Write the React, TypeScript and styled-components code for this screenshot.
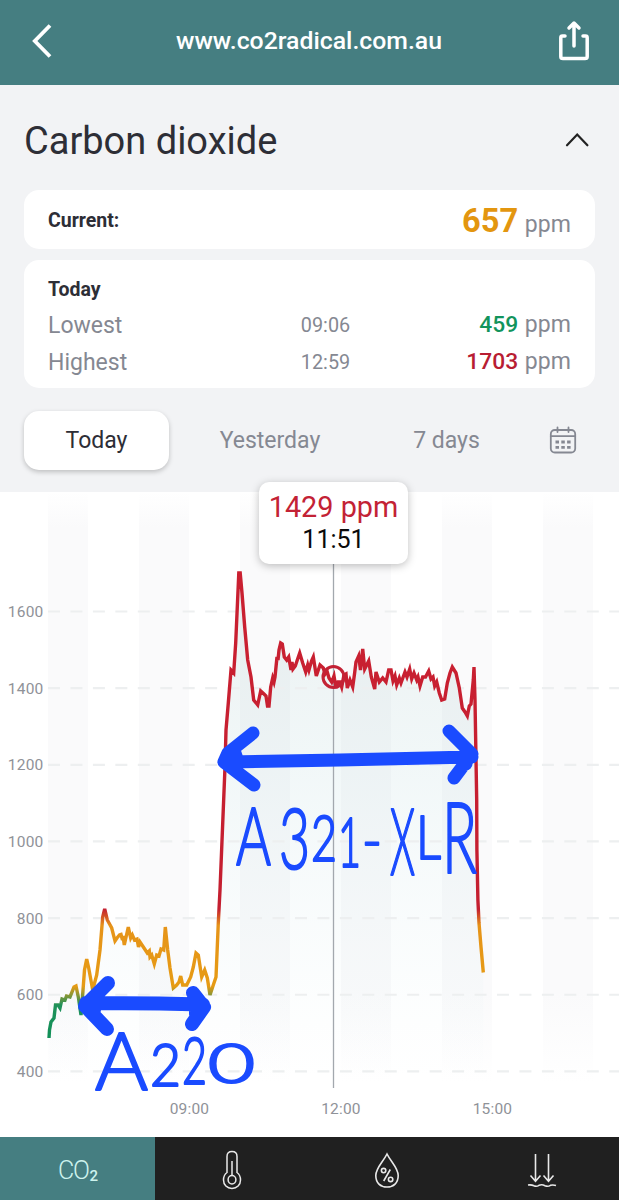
import React from "react";
import styled, { createGlobalStyle } from "styled-components";

const Global = createGlobalStyle`
  *, *::before, *::after { box-sizing: border-box; }
  body { margin: 0; background: #fff; font-family: Roboto, "Liberation Sans", sans-serif; }
`;

const Screen = styled.div`
  width: 619px;
  height: 1200px;
  display: flex;
  flex-direction: column;
  overflow: hidden;
  background: #fff;
`;

const Header = styled.header`
  height: 85px;
  flex: none;
  display: grid;
  grid-template-columns: 60px 1fr 60px;
  align-items: center;
  padding: 0 15px 4px 12px;
  background: #457e81;
  color: #fff;
`;

const IconButton = styled.button`
  display: flex;
  align-items: center;
  justify-content: center;
  padding: 0;
  border: 0;
  background: none;
  color: inherit;
`;

const SiteName = styled.div`
  padding-left: 2px;
  text-align: center;
  font-size: 24.8px;
  font-weight: 500;
  line-height: 30px;
  white-space: nowrap;
`;

const Summary = styled.section`
  height: 407px;
  flex: none;
  padding: 0 24px;
  background: #f2f3f5;
  color: #2d2e36;
`;

const TitleRow = styled.div`
  height: 105px;
  display: flex;
  align-items: center;
  justify-content: space-between;
  padding: 7px 6px 0 0;
`;

const Title = styled.h1`
  margin: 0;
  font-size: 38px;
  font-weight: 400;
  line-height: 44px;
`;

const Card = styled.div<{ $height: number; $gap: number }>`
  height: ${(p) => p.$height}px;
  margin-bottom: ${(p) => p.$gap}px;
  padding: 0 24px;
  border-radius: 15px;
  background: #fff;
`;

const CurrentRow = styled.div`
  height: 62px;
  display: flex;
  align-items: center;
  justify-content: space-between;
`;

const CardLabel = styled.div`
  font-size: 19.5px;
  font-weight: 700;
  line-height: 24px;
`;

const CardHeading = styled(CardLabel)`
  height: 46px;
  padding-top: 18px;
`;

const Reading = styled.div`
  text-align: right;
  white-space: nowrap;
`;

const Value = styled.span<{ $size: number; $color: string; $weight: number }>`
  font-size: ${(p) => p.$size}px;
  font-weight: ${(p) => p.$weight};
  color: ${(p) => p.$color};
`;

const Unit = styled.span`
  margin-left: 6.5px;
  font-size: 23px;
  color: #858892;
  letter-spacing: 0.1px;
`;

const StatRow = styled.div`
  height: 37px;
  display: grid;
  grid-template-columns: 1fr 60px 1fr;
  align-items: center;
  color: #858892;
`;

const StatName = styled.div`
  padding-top: 1px;
  font-size: 23px;
`;

const StatTime = styled.div`
  width: 92px;
  text-align: center;
  font-size: 19.8px;
  padding-top: 2px;
`;

const Ranges = styled.nav`
  display: flex;
  align-items: center;
  height: 60px;
`;

const Range = styled.button<{ $width: number; $active?: boolean }>`
  width: ${(p) => p.$width}px;
  height: 59px;
  flex: none;
  display: flex;
  align-items: center;
  justify-content: center;
  padding: 0;
  border: 0;
  border-radius: 15px;
  font-family: inherit;
  font-size: 23px;
  color: ${(p) => (p.$active ? "#2d2e36" : "#858892")};
  background: ${(p) => (p.$active ? "#fff" : "transparent")};
  box-shadow: ${(p) => (p.$active ? "0 2px 5px rgba(0, 0, 0, 0.22)" : "none")};
`;

const ChartPanel = styled.section`
  position: relative;
  height: 645px;
  flex: none;
`;

const Tooltip = styled.div`
  position: absolute;
  left: 259px;
  top: -10px;
  width: 149px;
  height: 82px;
  padding-top: 9px;
  border-radius: 10px;
  background: #fff;
  box-shadow: 0 2px 9px rgba(0, 0, 0, 0.25);
  text-align: center;
`;

const TooltipValue = styled.div`
  color: #c32235;
  font-size: 28.8px;
  line-height: 33px;
  white-space: nowrap;
`;

const TooltipTime = styled.div`
  color: #0a0a0a;
  font-size: 25px;
  line-height: 32px;
`;

const ChartSvg = styled.svg`
  display: block;
`;

const AxisText = styled.text`
  font-family: Roboto, sans-serif;
  font-size: 15.5px;
  letter-spacing: 0.2px;
  fill: #8f9298;
`;

const NoteText = styled.text`
  font-family: Lato, sans-serif;
  font-weight: 300;
  fill: #1a4bff;
  stroke: #1a4bff;
  stroke-width: 2.2px;
  stroke-linejoin: round;
`;

const TabBar = styled.nav`
  flex: 1;
  display: grid;
  grid-template-columns: repeat(4, 1fr);
`;

const Tab = styled.div<{ $active?: boolean }>`
  display: flex;
  align-items: center;
  justify-content: center;
  padding-top: 3px;
  background: ${(p) => (p.$active ? "#457e81" : "#202020")};
  color: ${(p) => (p.$active ? "#cdf3ee" : "#e9e9e9")};
`;

const Formula = styled.div`
  padding-top: 2px;
  font-size: 25px;
  font-weight: 300;
  letter-spacing: -1.4px;
  line-height: 30px;
  white-space: nowrap;
`;

const Subscript = styled.span`
  font-size: 15px;
  font-weight: 500;
  line-height: 1;
  margin-left: 1px;
  vertical-align: -2px;
`;

const bands = [
  [48, 40],
  [139, 50],
  [240, 50],
  [341, 50],
  [442, 50],
  [543, 50],
];

const levels = [1600, 1400, 1200, 1000, 800, 600, 400];
const levelY = (v: number) => 611.5 + ((1600 - v) / 200) * 76.65;

const times: [string, number][] = [
  ["09:00", 189.5],
  ["12:00", 341],
  ["15:00", 492.5],
];

const trace = `49,1038 49.5,1030 51,1022 54,1018 55.5,1005 58,1005 60,1008 62,999 65,1000 66.5,996 70,997 74,987
76,986 78.5,998 81,1015 82.5,997 84.5,970 86.7,959 88.7,968 92.7,990 96.7,975 100,950 102.7,917 104.7,909
107.3,920 111.7,928 115,941 117,938 119.5,935 121,934.5 122.5,940 123,936 124.3,945 128.3,927 130.7,938 132.3,935 134.5,940
137,939 138.5,947 140,942 144,948 147.3,953 149.3,951 150,957 151.7,955 154.3,964 156.7,955 159,956 161,949
163.7,950 165.3,927 167.7,950 170,968 173.3,988 176.7,985 179,982 180.7,976 182.7,985 186.7,985 190.7,977
193.3,967 196,953 198.3,955 201.7,977 204.7,970 207.3,978 210,995 213.3,985 216,977 218.3,923 220,890
225,767 226,730 228.3,703 231,670 233.7,673 235.7,643 238.8,573 240.2,573 242,593 244.7,627 247.7,660
251,677 253.7,700 257.7,705 260.7,691 264,694 266,696 267.5,706 269,706 270.7,687 272.7,678 274,682 275,677 277,657
278,660 279,650 280.7,643 282.3,644 284.3,657 286.7,660 288.7,657 291,670 292,662 293,669 295.3,666 297.3,660 299.7,653
302.7,663 305.7,672 307.7,665 309,670 311.5,661 313.3,657 316.3,676 320,665 323.3,668 325,674 327,671 329,678
331.7,682 334,676 336,688 338,682 340,682 341.7,687 344,675 346,674 347.3,688 350,680 352.7,687 354.5,674
356,662 358.7,656 360.5,670 362.7,649 364.7,669 368.7,661 371.3,677 374.7,689 376,672 379.3,682 382.7,678
386,682 388.7,670 391,670 393,681 395,676 396.7,685 399.3,678 401,683 405,672 407,677 409.7,669 411.7,679
414,673 416.7,680 418,677 420,686 422.7,677 425.5,677 428.7,671 431,679 433,677 434.7,686 436.7,682
439.3,693 441.7,700 444.7,699 447.3,683 450,673 452.3,667 456,673 459.3,688 462.3,708 465,712 467.3,716
469.3,706 471,704 473.3,680 474,667 475,700 476.7,800 476.9,850 477.9,900 479,923 481,947 483.3,972.5`;

function Chart() {
  return (
    <ChartSvg width="619" height="645" viewBox="0 492 619 645" fill="none">
      <defs>
        <linearGradient id="level" gradientUnits="userSpaceOnUse" x1="0" y1="573" x2="0" y2="1040">
          <stop offset="0" stopColor="#ca2031" />
          <stop offset="0.72" stopColor="#c41f30" />
          <stop offset="0.755" stopColor="#e69419" />
          <stop offset="0.885" stopColor="#e69b14" />
          <stop offset="0.925" stopColor="#1f915a" />
          <stop offset="1" stopColor="#109058" />
        </linearGradient>
        <linearGradient id="under" gradientUnits="userSpaceOnUse" x1="0" y1="573" x2="0" y2="1080">
          <stop offset="0" stopColor="#457e81" stopOpacity="0.11" />
          <stop offset="0.4" stopColor="#5aa4ac" stopOpacity="0.08" />
          <stop offset="1" stopColor="#7fc4d0" stopOpacity="0" />
        </linearGradient>
        <linearGradient id="band" x1="0" y1="0" x2="0" y2="1">
          <stop offset="0" stopColor="#fafafb" stopOpacity="0" />
          <stop offset="0.06" stopColor="#fafafb" />
          <stop offset="0.85" stopColor="#fafafb" />
          <stop offset="1" stopColor="#fafafb" stopOpacity="0" />
        </linearGradient>
      </defs>
      {bands.map(([x, w]) => (
        <rect key={x} x={x} y={492} width={w} height={590} fill="url(#band)" />
      ))}
      <polygon points={`${trace} 483.3,1085 49,1085`} fill="url(#under)" />
      {levels.map((v) => (
        <g key={v}>
          <path d={`M48 ${levelY(v)}H619`} stroke="#edeff0" strokeWidth="2.2" strokeDasharray="12 10.45" />
          <AxisText x="43.5" y={levelY(v) + 5.5} textAnchor="end">{v}</AxisText>
        </g>
      ))}
      {times.map(([label, x]) => (
        <AxisText key={label} x={x} y={1113.5} textAnchor="middle">{label}</AxisText>
      ))}
      <path d="M333.5 560V1088" stroke="#a3a8ae" strokeWidth="1.3" />
      <polyline points={trace} stroke="url(#level)" strokeWidth="3.4" strokeLinejoin="miter" />
      <circle cx="333.5" cy="677" r="10.5" stroke="#c32235" strokeWidth="3" />
      <g stroke="#1a4bff" strokeWidth="13" strokeLinecap="round" strokeLinejoin="round">
        <path d="M253 733L228 753L224 762L254 785M235 753L238 762M228 762L340 760L472 757M449 731L472 754L454 778M466 750V764" />
        <path d="M108 983L85 1006L107 1029M86 1003L160 1003.5L203 1004.5M193 993L204 1007L192 1024M94 1000V1010M196 1000V1014" strokeWidth="14" />
      </g>
      <NoteText>
        <tspan x="236" y="865" fontSize="80" textLength="35" lengthAdjust="spacingAndGlyphs">A</tspan>
        <tspan x="279" y="869" fontSize="85" textLength="31" lengthAdjust="spacingAndGlyphs">3</tspan>
        <tspan x="311" y="861" fontSize="64" textLength="26" lengthAdjust="spacingAndGlyphs">2</tspan>
        <tspan x="338" y="867" fontSize="68" textLength="23" lengthAdjust="spacingAndGlyphs">1</tspan>
        <tspan x="362" y="861" fontSize="60" textLength="20" lengthAdjust="spacingAndGlyphs">-</tspan>
        <tspan x="390" y="875" fontSize="93" textLength="25" lengthAdjust="spacingAndGlyphs">X</tspan>
        <tspan x="416" y="859" fontSize="61" textLength="25" lengthAdjust="spacingAndGlyphs">L</tspan>
        <tspan x="442" y="873" fontSize="99" textLength="35" lengthAdjust="spacingAndGlyphs">R</tspan>
      </NoteText>
      <NoteText>
        <tspan x="95" y="1090" fontSize="80" textLength="53" lengthAdjust="spacingAndGlyphs">A</tspan>
        <tspan x="150" y="1086" fontSize="59" textLength="31" lengthAdjust="spacingAndGlyphs">2</tspan>
        <tspan x="182" y="1084" fontSize="66" textLength="25" lengthAdjust="spacingAndGlyphs">2</tspan>
        <tspan x="208" y="1083" fontSize="55" textLength="47" lengthAdjust="spacingAndGlyphs">0</tspan>
      </NoteText>
    </ChartSvg>
  );
}

const BackIcon = () => (
  <svg width="22" height="36" viewBox="0 0 22 36" fill="none" stroke="currentColor" strokeWidth="3.8">
    <path d="M19 2.5L3.8 18L19 33.5" />
  </svg>
);

const ShareIcon = () => (
  <svg width="32" height="42" viewBox="0 0 32 42" fill="none" stroke="currentColor" strokeWidth="3.5" strokeLinecap="round" strokeLinejoin="round">
    <path d="M7 16H4.5Q2.8 16 2.8 17.7V36.5Q2.8 38.6 5 38.6H27Q29.2 38.6 29.2 36.5V17.7Q29.2 16 27.5 16H25M16 26V3.5M11 8L16 3L21 8" />
  </svg>
);

const CollapseIcon = () => (
  <svg width="24" height="18" viewBox="0 0 24 18" fill="none" stroke="#222" strokeWidth="2.2" strokeLinecap="round">
    <path d="M2 13.3L12.2 2.5L22.4 13.3" />
  </svg>
);

const CalendarIcon = () => (
  <svg width="28" height="28" viewBox="0 0 28 28" fill="none" stroke="#858892" strokeWidth="1.8" strokeLinecap="round">
    <rect x="1.8" y="4" width="24.4" height="22.5" rx="4" />
    <path d="M1.8 10.2H26.2M8.5 1.5V6M19.5 1.5V6" />
    <path d="M6.5 16H10M12.3 16H15.8M18.1 16H21.6M6.5 21.3H10M12.3 21.3H15.8M18.1 21.3H21.6" strokeWidth="2.8" strokeLinecap="butt" />
  </svg>
);

const ThermometerIcon = () => (
  <svg width="22" height="40" viewBox="0 0 22 40" fill="none" stroke="currentColor" strokeWidth="1.5">
    <path d="M6 22.5V6.5Q6 1.6 11 1.6Q16 1.6 16 6.5V22.5Q19.5 25 19.5 30C19.5 35 16 38.4 11 38.4C6 38.4 2.5 35 2.5 30Q2.5 25 6 22.5ZM11 11V25.6" />
    <ellipse cx="11" cy="29.8" rx="3.9" ry="4.2" />
  </svg>
);

const HumidityIcon = () => (
  <svg width="26" height="37" viewBox="0 0 26 37" fill="none" stroke="currentColor" strokeWidth="1.6">
    <path d="M13 2C9 10 1.8 16 1.8 23.5C1.8 31 6.5 35 13 35C19.5 35 24.2 31 24.2 23.5C24.2 16 17 10 13 2ZM16.3 17.5L9.7 29" />
    <circle cx="9.6" cy="18.6" r="2.2" />
    <circle cx="16.6" cy="27.4" r="2.2" />
  </svg>
);

const PressureIcon = () => (
  <svg width="30" height="37" viewBox="0 0 30 37" fill="none" stroke="currentColor" strokeWidth="1.6">
    <path d="M8.5 2V29M3.5 23.5L8.5 29.2L13.5 23.5M21.5 2V29M16.5 23.5L21.5 29.2L26.5 23.5" />
    <path d="M1 33Q4.5 32.5 7 33.8Q9.5 35 12 33.3Q15 32 18 33.8Q21 35 23.5 33.3Q26 32.5 29 33.5" />
  </svg>
);

export default function App() {
  return (
    <Screen>
      <Global />
      <Header>
        <IconButton aria-label="Back"><BackIcon /></IconButton>
        <SiteName>www.co2radical.com.au</SiteName>
        <IconButton aria-label="Share"><ShareIcon /></IconButton>
      </Header>
      <Summary>
        <TitleRow>
          <Title>Carbon dioxide</Title>
          <CollapseIcon />
        </TitleRow>
        <Card $height={59} $gap={11}>
          <CurrentRow>
            <CardLabel>Current:</CardLabel>
            <Reading>
              <Value $size={32.6} $weight={700} $color="#e3960f">657</Value>
              <Unit>ppm</Unit>
            </Reading>
          </CurrentRow>
        </Card>
        <Card $height={128} $gap={22}>
          <CardHeading>Today</CardHeading>
          <StatRow>
            <StatName>Lowest</StatName>
            <StatTime>09:06</StatTime>
            <Reading>
              <Value $size={22.8} $weight={500} $color="#12945c">459</Value>
              <Unit>ppm</Unit>
            </Reading>
          </StatRow>
          <StatRow>
            <StatName>Highest</StatName>
            <StatTime>12:59</StatTime>
            <Reading>
              <Value $size={22.8} $weight={500} $color="#b81d33">1703</Value>
              <Unit>ppm</Unit>
            </Reading>
          </StatRow>
        </Card>
        <Ranges>
          <Range $width={145} $active>Today</Range>
          <Range $width={202}>Yesterday</Range>
          <Range $width={151}>7 days</Range>
          <Range $width={82} aria-label="Pick a date"><CalendarIcon /></Range>
        </Ranges>
      </Summary>
      <ChartPanel>
        <Chart />
        <Tooltip>
          <TooltipValue>1429 ppm</TooltipValue>
          <TooltipTime>11:51</TooltipTime>
        </Tooltip>
      </ChartPanel>
      <TabBar>
        <Tab $active>
          <Formula>CO<Subscript>2</Subscript></Formula>
        </Tab>
        <Tab><ThermometerIcon /></Tab>
        <Tab><HumidityIcon /></Tab>
        <Tab><PressureIcon /></Tab>
      </TabBar>
    </Screen>
  );
}
